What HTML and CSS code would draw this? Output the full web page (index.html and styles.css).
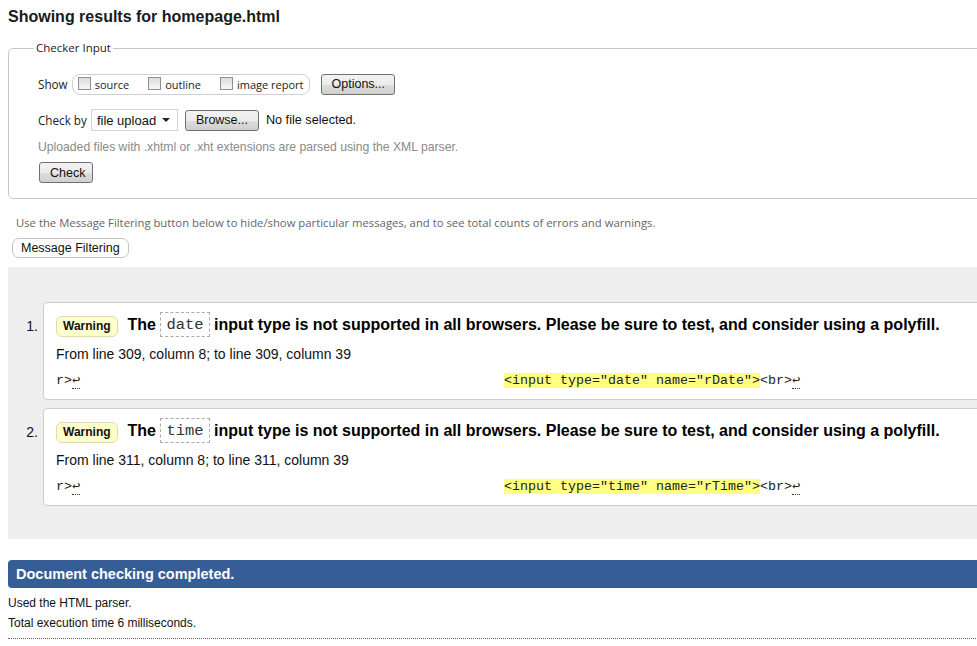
FILE: index.html
```html
<!DOCTYPE html>
<html>
<head>
<meta charset="utf-8">
<title>Showing results for homepage.html</title>
<link rel="stylesheet" href="styles.css">
</head>
<body>
<div class="frame">
<div class="page">
  <h2 class="title">Showing results for homepage.html</h2>

  <fieldset class="checker">
    <legend>Checker Input</legend>
    <div class="row show-row">
      <span class="lbl">Show</span>
      <span class="showbox">
        <label class="opt"><span class="cb"></span>source</label>
        <label class="opt"><span class="cb"></span>outline</label>
        <label class="opt"><span class="cb"></span>image report</label>
      </span>
      <button class="btn btn-options">Options...</button>
    </div>
    <div class="row by-row">
      <span class="lbl">Check by</span>
      <span class="select">file upload<span class="caret"></span></span>
      <button class="btn btn-browse">Browse...</button>
      <span class="nofile">No file selected.</span>
    </div>
    <p class="hint">Uploaded files with .xhtml or .xht extensions are parsed using the XML parser.</p>
    <button class="btn btn-check">Check</button>
  </fieldset>

  <p class="filter-note">Use the Message Filtering button below to hide/show particular messages, and to see total counts of errors and warnings.</p>
  <button class="pill">Message Filtering</button>

  <div class="results">
    <div class="item">
      <span class="num">1.</span>
      <div class="box">
        <div class="head">
          <span class="badge">Warning</span>
          <span class="msg">The <code class="kw">date</code> input type is not supported in all browsers. Please be sure to test, and consider using a polyfill.</span>
        </div>
        <p class="loc">From line 309, column 8; to line 309, column 39</p>
        <code class="extract">r&gt;<span class="lf">↩</span>                                                     <b class="hl">&lt;input type="date" name="rDate"&gt;</b>&lt;br&gt;<span class="lf">↩</span></code>
      </div>
    </div>
    <div class="item">
      <span class="num">2.</span>
      <div class="box">
        <div class="head">
          <span class="badge">Warning</span>
          <span class="msg">The <code class="kw">time</code> input type is not supported in all browsers. Please be sure to test, and consider using a polyfill.</span>
        </div>
        <p class="loc">From line 311, column 8; to line 311, column 39</p>
        <code class="extract">r&gt;<span class="lf">↩</span>                                                     <b class="hl">&lt;input type="time" name="rTime"&gt;</b>&lt;br&gt;<span class="lf">↩</span></code>
      </div>
    </div>
  </div>

  <div class="done">Document checking completed.</div>
  <p class="info">Used the HTML parser.</p>
  <p class="info">Total execution time 6 milliseconds.</p>
  <div class="dots"></div>
</div>
</div>
</body>
</html>
```

FILE: styles.css
```css
html, body {
  overflow: hidden;
}
body {
  margin: 8px 0 8px 8px;
  background: #fff;
  color: #000;
  font-family: "Liberation Sans", Arial, sans-serif;
}
.frame {
  width: calc(100vw - 8px);
  overflow: hidden;
}
.page {
  width: 1060px;
}
.title {
  margin: 0;
  font-size: 16px;
  line-height: 18px;
  font-weight: bold;
  color: #1a1a1a;
}

/* Checker input fieldset */
.checker {
  margin: 14px 0 0 0;
  padding: 17px 0 15px 29px;
  border: 1px solid #c8c8c8;
  border-radius: 5px;
}
.checker legend {
  margin-left: -4px;
  padding: 0 2px;
  font-family: "Open Sans", "DejaVu Sans", sans-serif;
  font-size: 11.5px;
  line-height: 16px;
  color: #222;
}
.row {
  display: flex;
  align-items: center;
}
.lbl {
  font-family: "Open Sans", "DejaVu Sans", sans-serif;
  font-size: 11.7px;
  color: #222;
}
.show-row {
  height: 22px;
}
.showbox {
  display: flex;
  align-items: center;
  margin-left: 4px;
  height: 19px;
  padding: 0 5px 0 5px;
  border: 1px solid #cfcfcf;
  border-radius: 8px;
}
.opt {
  display: flex;
  align-items: center;
  font-family: "Open Sans", "DejaVu Sans", sans-serif;
  font-size: 11px;
  color: #222;
}
.opt + .opt {
  margin-left: 19px;
}
.cb {
  display: inline-block;
  width: 11px;
  height: 11px;
  border: 1px solid #8e8f8f;
  background: linear-gradient(#dcdcdc, #f6f6f6);
  margin-right: 4px;
  margin-top: -2px;
}
.btn {
  font-family: "Liberation Sans", Arial, sans-serif;
  font-size: 12.5px;
  color: #111;
  height: 21px;
  padding: 0 10px;
  border: 1px solid #707070;
  border-radius: 3px;
  background: linear-gradient(#f2f2f2, #ebebeb 50%, #dddddd 51%, #cfcfcf);
}
.btn-options {
  margin-left: 11px;
  width: 74px;
}
.by-row {
  margin-top: 14px;
  height: 22px;
}
.select {
  display: flex;
  align-items: center;
  justify-content: space-between;
  box-sizing: border-box;
  width: 87px;
  height: 22px;
  margin-left: 4px;
  padding: 0 7px 0 5px;
  border: 1px solid #d4d4d4;
  font-size: 13px;
  color: #111;
}
.caret {
  width: 0;
  height: 0;
  border-left: 4px solid transparent;
  border-right: 4px solid transparent;
  border-top: 4px solid #222;
}
.btn-browse {
  margin-left: 7px;
  width: 74px;
}
.nofile {
  margin-left: 7px;
  font-size: 12.7px;
  color: #111;
}
.hint {
  margin: 9px 0 0 0;
  font-size: 12.2px;
  line-height: 14px;
  color: #8a8a8a;
}
.btn-check {
  margin: 8px 0 0 1px;
  width: 54px;
  display: block;
}

/* Message filtering */
.filter-note {
  margin: 15px 0 0 8px;
  font-family: "Open Sans", "DejaVu Sans", sans-serif;
  font-size: 11.3px;
  line-height: 17px;
  color: #666;
}
.pill {
  display: block;
  margin: 7px 0 0 4px;
  height: 20px;
  padding: 0 8px;
  font-family: "Liberation Sans", Arial, sans-serif;
  font-size: 12.5px;
  color: #111;
  background: #fff;
  border: 1px solid #c4c4c4;
  border-radius: 7px;
}

/* Results */
.results {
  margin-top: 9px;
  background: #eeeeee;
  padding: 35px 0 33px 0;
  display: flex;
  flex-direction: column;
  gap: 8px;
}
.item {
  display: flex;
  align-items: flex-start;
}
.num {
  box-sizing: border-box;
  width: 35px;
  padding-right: 5px;
  margin-top: 11px;
  line-height: 26px;
  text-align: right;
  font-size: 14px;
  color: #111;
}
.box {
  flex: 1;
  background: #fff;
  border: 1px solid #cccccc;
  border-radius: 4px;
  padding: 10px 12px 10px 12px;
}
.head {
  display: flex;
  align-items: center;
  height: 26px;
}
.badge {
  display: inline-block;
  box-sizing: border-box;
  height: 21px;
  line-height: 19px;
  padding: 0 6px;
  background: #ffffcc;
  border: 1px solid #dedbb0;
  border-radius: 6px;
  font-size: 12px;
  font-weight: bold;
  color: #111;
  margin-right: 10px;
}
.msg {
  font-size: 16px;
  font-weight: bold;
  color: #000;
  white-space: nowrap;
}
.kw {
  display: inline-block;
  vertical-align: middle;
  margin-top: -3px;
  box-sizing: border-box;
  height: 25px;
  line-height: 21px;
  padding: 2px 5px 0 5px;
  border: 1px dashed #aaa;
  font-family: "Liberation Mono", "Courier New", monospace;
  font-size: 15.5px;
  font-weight: normal;
  color: #333;
}
.loc {
  margin: 6px 0 0 0;
  font-size: 14px;
  line-height: 18px;
  color: #111;
}
.extract {
  display: block;
  margin-top: 10px;
  white-space: pre;
  font-family: "Liberation Mono", "Courier New", monospace;
  font-size: 13.33px;
  line-height: 16px;
  color: #222;
}
.hl {
  font-weight: normal;
  background: #ffff80;
}
.lf {
  border-bottom: 1px dotted #333;
}

/* Footer */
.done {
  margin-top: 21px;
  height: 28px;
  line-height: 28px;
  padding-left: 8px;
  background: #365d95;
  color: #fff;
  font-size: 14.5px;
  font-weight: bold;
  border-radius: 4px 0 0 4px;
}
.info {
  margin: 0;
  font-size: 12px;
  line-height: 20px;
  color: #111;
}
.done + .info {
  margin-top: 5px;
}
.dots {
  margin-top: 5px;
  border-top: 1px dotted #666;
}
```
